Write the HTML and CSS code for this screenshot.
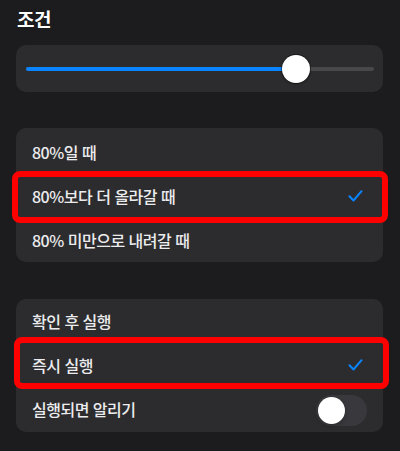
FILE: index.html
```html
<!DOCTYPE html>
<html lang="ko">
<head>
<meta charset="utf-8">
<link rel="stylesheet" href="styles.css">
</head>
<body>
<div class="page">
  <h1 class="title">조건</h1>
  <div class="card slider-card">
    <div class="track">
      <div class="fill" style="width:77.6%"></div>
      <div class="thumb" style="left:77.6%"></div>
    </div>
  </div>

  <div class="card list list-a">
    <div class="row">80%일 때</div>
    <div class="row">80%보다 더 올라갈 때
      <svg class="check" width="15" height="12" viewBox="0 0 15 12"><path d="M1.5 6.2 L5.5 10.5 L13.5 1.2" fill="none" stroke="#0a84ff" stroke-width="2" stroke-linecap="round" stroke-linejoin="round"/></svg>
      <span class="mark mark-a"></span>
    </div>
    <div class="row">80% 미만으로 내려갈 때</div>
  </div>

  <div class="card list list-b">
    <div class="row">확인 후 실행</div>
    <div class="row">즉시 실행
      <svg class="check" width="15" height="12" viewBox="0 0 15 12"><path d="M1.5 6.2 L5.5 10.5 L13.5 1.2" fill="none" stroke="#0a84ff" stroke-width="2" stroke-linecap="round" stroke-linejoin="round"/></svg>
      <span class="mark mark-b"></span>
    </div>
    <div class="row">실행되면 알리기
      <span class="toggle"><span class="knob"></span></span>
    </div>
  </div>
</div>
</body>
</html>
```

FILE: styles.css
```css
html, body {
  margin: 0;
  padding: 0;
  background: #1c1c1e;
}
body {
  width: 400px;
  height: 451px;
  overflow: hidden;
  font-family: "Noto Sans CJK KR", "Noto Sans", sans-serif;
  color: #ececee;
}
.page {
  padding: 0 17px 0 16px;
}
.title {
  margin: 7px 0 0 1px;
  font-size: 19px;
  line-height: 24px;
  font-weight: 700;
  letter-spacing: -0.5px;
  color: #ffffff;
}
.card {
  background: #2c2c2e;
  border-radius: 10px;
  position: relative;
}
.slider-card {
  margin-top: 14px;
  height: 47px;
  display: flex;
  align-items: center;
  padding: 0 9px 0 10px;
}
.track {
  position: relative;
  flex: 1;
  height: 4px;
  border-radius: 2px;
  background: #48484a;
}
.fill {
  height: 4px;
  border-radius: 2px;
  background: #0a84ff;
}
.thumb {
  position: absolute;
  top: 50%;
  width: 28px;
  height: 28px;
  margin: -14px 0 0 -14px;
  border-radius: 50%;
  background: #ffffff;
  box-shadow: 0 0 0 1px rgba(0,0,0,0.35), 0 1px 3px rgba(0,0,0,0.3);
}
.list-a {
  margin-top: 36px;
  padding-top: 2px;
}
.list-b {
  margin-top: 37px;
  padding-bottom: 1px;
}
.row {
  position: relative;
  height: 44px;
  display: flex;
  align-items: center;
  padding: 0 16px 0 16px;
  font-size: 16px;
  font-weight: 500;
  letter-spacing: -0.5px;
}
.check {
  margin-left: auto;
  margin-right: 4px;
}
.mark {
  position: absolute;
  border: 6px solid #ff0000;
  border-radius: 8px;
  pointer-events: none;
}
.mark-a {
  top: -3px;
  bottom: -5px;
  left: -4px;
  right: -5px;
}
.mark-b {
  top: -6px;
  bottom: -2px;
  left: -2px;
  right: -6px;
}
.toggle {
  margin-left: auto;
  margin-top: 2px;
  width: 51px;
  height: 31px;
  border-radius: 16px;
  background: #39393d;
  position: relative;
}
.knob {
  position: absolute;
  top: 2px;
  left: 2px;
  width: 27px;
  height: 27px;
  border-radius: 50%;
  background: #ffffff;
  box-shadow: 0 2px 4px rgba(0,0,0,0.25);
}
```
